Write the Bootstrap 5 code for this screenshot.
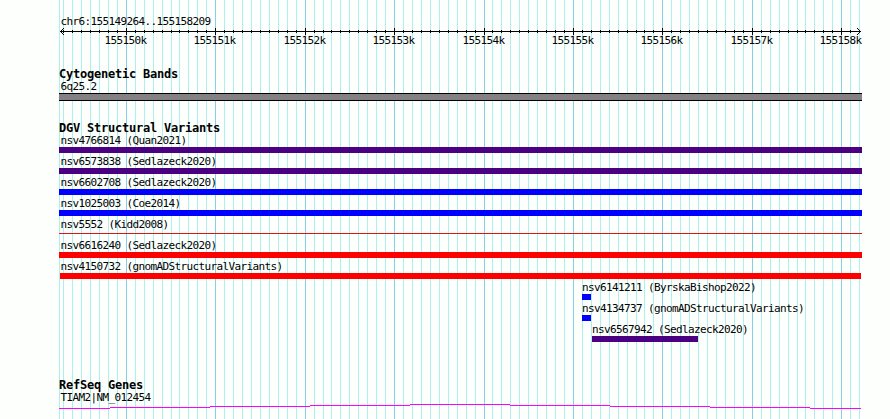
<!DOCTYPE html>
<html lang="en">
<head>
  <meta charset="UTF-8">
  <title>chr6:155149264..155158209</title>
  <link href="https://cdn.jsdelivr.net/npm/bootstrap@5.3.0/dist/css/bootstrap.min.css" rel="stylesheet">
  <style>
    body {
      background-color: #fdfffc;
      color: #000;
      font-family: "DejaVu Sans Mono", "Liberation Mono", monospace;
      font-size: 11px;
      line-height: 13px;
      letter-spacing: -0.62px;
    }
    .browser {
      width: 890px;
      height: 419px;
      padding: 15px 28px 0 59px;
    }
    .browser svg {
      display: block;
      shape-rendering: crispEdges;
    }
    .track-title {
      height: 13px;
      font-size: 12px;
      font-weight: bold;
      line-height: 14px;
      letter-spacing: -0.22px;
    }
    .track-label {
      height: 13px;
      padding-left: 1.4px;
      white-space: pre;
    }
    .track-cyto { margin-top: 20px; }
    .track-dgv { margin-top: 20px; }
    .track-genes { margin-top: 34px; }
    .band {
      height: 8px;
      background-color: #848084;
      border: solid #000;
      border-width: 1px 0;
    }
    .feature { height: 21px; }
    .feature-bar { height: 6px; }
    .gain { background-color: #00f; }
    .loss { background-color: #f00; }
    .complex { background-color: #4b0082; }
    .thin {
      height: 1px;
      margin-top: 2px;
      background-color: #dc1414;
    }
    .inset-1 { margin: 0 1px; }
    .at-582 { margin-left: 523px; }
    .at-592 { margin-left: 533px; }
    .at-582 .track-label,
    .at-592 .track-label { padding-left: 0; }
    .w-9px { width: 9px; }
    .w-106px { width: 106px; }
  </style>
</head>
<body class="m-0 overflow-hidden">
  <div class="browser position-relative">
    <svg id="grid" class="position-absolute top-0 start-0 z-n1" width="890" height="419"></svg>

    <div class="track-label">chr6:155149264..155158209</div>
    <svg id="ruler" width="803" height="19" viewBox="59 28 803 19" overflow="visible"></svg>

    <div class="track-cyto">
      <div class="track-title">Cytogenetic Bands</div>
      <div class="track-label">6q25.2</div>
      <div class="band"></div>
    </div>

    <div class="track-dgv">
      <div class="track-title">DGV Structural Variants</div>
      <div class="feature"><div class="track-label">nsv4766814 (Quan2021)</div><div class="feature-bar complex"></div></div>
      <div class="feature"><div class="track-label">nsv6573838 (Sedlazeck2020)</div><div class="feature-bar complex"></div></div>
      <div class="feature"><div class="track-label">nsv6602708 (Sedlazeck2020)</div><div class="feature-bar gain"></div></div>
      <div class="feature"><div class="track-label">nsv1025003 (Coe2014)</div><div class="feature-bar gain"></div></div>
      <div class="feature"><div class="track-label">nsv5552 (Kidd2008)</div><div class="thin"></div></div>
      <div class="feature"><div class="track-label">nsv6616240 (Sedlazeck2020)</div><div class="feature-bar loss"></div></div>
      <div class="feature"><div class="track-label">nsv4150732 (gnomADStructuralVariants)</div><div class="feature-bar loss inset-1"></div></div>
      <div class="feature at-582"><div class="track-label">nsv6141211 (ByrskaBishop2022)</div><div class="feature-bar gain w-9px"></div></div>
      <div class="feature at-582"><div class="track-label">nsv4134737 (gnomADStructuralVariants)</div><div class="feature-bar gain w-9px"></div></div>
      <div class="feature at-592"><div class="track-label">nsv6567942 (Sedlazeck2020)</div><div class="feature-bar complex w-106px"></div></div>
    </div>

    <div class="track-genes">
      <div class="track-title">RefSeq Genes</div>
      <div class="track-label">TIAM2|NM_012454</div>
      <svg width="803" height="5">
        <path d="M0 4.5H51M51 3.5H151M151 2.5H251M251 1.5H351M351 .5H451M451 1.5H551M551 2.5H651M651 3.5H751M751 4.5H802" stroke="#f0f" fill="none"/>
      </svg>
    </div>
  </div>

  <script src="https://cdn.jsdelivr.net/npm/bootstrap@5.3.0/dist/js/bootstrap.bundle.min.js"></script>
  <script>
    const start = 155149264;
    const end = 155158209;
    const scale = 800 / (end - start + 1);

    // one grid line per 100 bp, darker per 1 kb
    let grid = '<rect x="59" y="0" width="1" height="419" fill="#afeeee"/>';
    let ruler = '<path d="M60 31.5H861" stroke="#000"/>';
    for (let bp = 155149300; bp <= end; bp += 100) {
      const x = Math.round(60 + (bp - start) * scale);
      const major = bp % 1000 === 0;
      grid += `<rect x="${x}" y="0" width="1" height="419" fill="${major ? '#87ceeb' : '#afeeee'}"/>`;
      ruler += `<rect x="${x}" y="${major ? 28 : 30}" width="1" height="${major ? 7 : 3}"/>`;
      if (major) {
        ruler += `<text x="${x - 21.4}" y="44">${bp / 1000}k</text>`;
      }
    }
    // arrow heads, one pixel per step
    for (let i = 0; i < 4; i++) {
      for (const y of [31 - i, 31 + i]) {
        ruler += `<rect x="${60 + i}" y="${y}" width="1" height="1"/>`;
        ruler += `<rect x="${860 - i}" y="${y}" width="1" height="1"/>`;
      }
    }
    document.getElementById('grid').innerHTML = grid;
    document.getElementById('ruler').innerHTML = ruler;
  </script>
</body>
</html>
